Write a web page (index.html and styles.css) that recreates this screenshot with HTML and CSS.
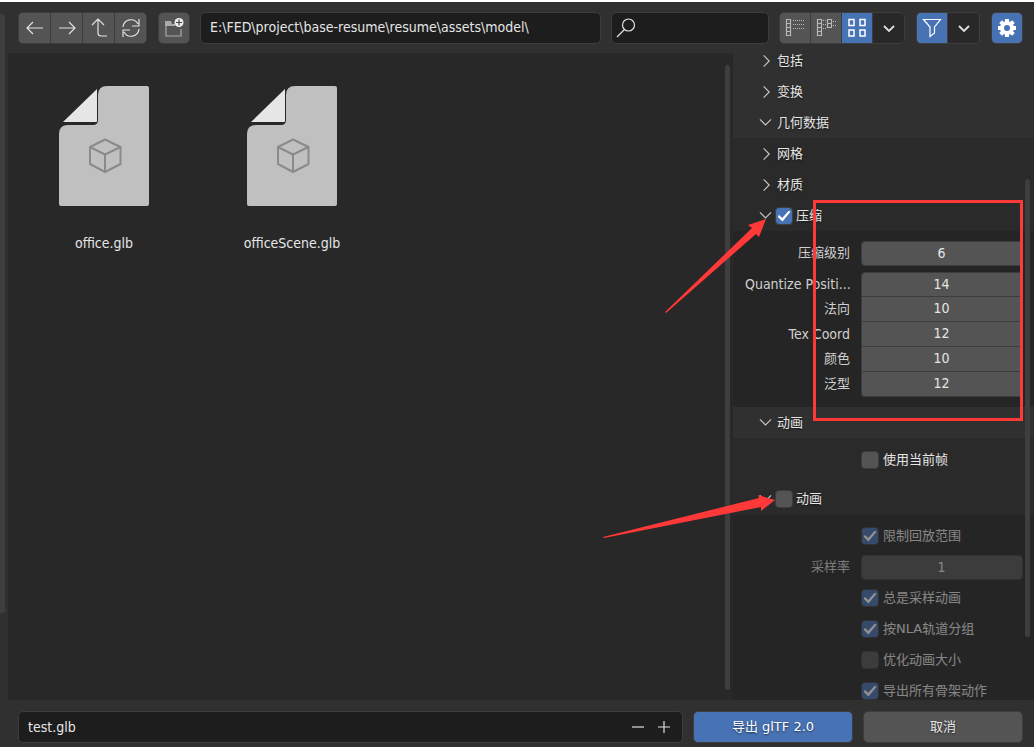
FILE: index.html
```html
<!DOCTYPE html>
<html lang="zh-CN">
<head>
<meta charset="utf-8">
<title>导出 glTF 2.0</title>
<link rel="stylesheet" href="styles.css">
</head>
<body>
<svg class="defs" aria-hidden="true">
  <symbol id="right" viewBox="0 0 14 14"><path d="M5 1l6 6-6 6"/></symbol>
  <symbol id="down" viewBox="0 0 14 14"><path d="M1 3l6 6 6-6"/></symbol>
  <symbol id="caret" viewBox="0 0 14 14"><path d="M2 5l5 5 5-5" stroke-width="1.800"/></symbol>
  <symbol id="file" viewBox="0 0 90 120">
    <path class="sheet" d="M48 0H88q2 0 2 2V118q0 2-2 2H2q-2 0-2-2V48Q0 39 9 39H34Q39 39 39 34V9Q39 0 48 0Z"/>
    <path class="fold" d="M38 3V35q0 1-1 1H4Z"/>
    <path class="cube" d="M46 53.500L61.500 61V78L46 86 31 78V61ZM31 61l15 7.500L61.500 61M46 68.500V86"/>
  </symbol>
</svg>
<div class="window">
  <header class="toolbar">
    <div class="group nav">
      <button class="tool" aria-label="后退"><svg viewBox="0 0 20 20"><path d="M18 10H2M8 4l-6 6 6 6"/></svg></button>
      <button class="tool" aria-label="前进"><svg viewBox="0 0 20 20"><path d="M2 10h16M12 4l6 6-6 6"/></svg></button>
      <button class="tool" aria-label="上级"><svg viewBox="0 0 20 20"><path d="M3 7l6-6 6 6M9 1v14q0 3 3 3h6"/></svg></button>
      <button class="tool" aria-label="刷新"><svg viewBox="0 0 20 20"><path d="M2 9a8 8 0 0 1 15-3M18 1v7h-7M18 11a8 8 0 0 1-15 3M2 19v-7h7"/></svg></button>
    </div>
    <button class="tool group" aria-label="新建文件夹"><svg class="folder" viewBox="0 0 20 20"><path d="M10 7H2v11h15v-7" stroke="#aaa"/><path d="M1 3h6l1 3h3v2H1z" fill="#aaa" stroke="none"/><circle cx="15" cy="4.500" r="4.500" fill="#eee" stroke="none"/><path d="M15 1.500v6M12 4.500h6" stroke="#444"/></svg></button>
    <input class="field path" aria-label="路径" value="E:\FED\project\base-resume\resume\assets\model\">
    <label class="field search"><svg viewBox="0 0 20 20"><circle cx="12.500" cy="7" r="6"/><path d="M8.500 11.500L1 19"/></svg><input type="search" aria-label="搜索"></label>
    <div class="group">
      <button class="tool" aria-label="垂直列表"><svg viewBox="0 0 20 20" class="dim"><path d="M1.500 1.500h4v16h-4zM1.500 5.500h4M1.500 9.500h4M1.500 13.500h4"/><path d="M8 2.500h12M8 6.500h12M8 10.500h12" stroke-dasharray="1 1"/></svg></button>
      <button class="tool" aria-label="水平列表"><svg viewBox="0 0 20 20" class="dim"><path d="M1.500 1.500h4v16h-4zM1.500 5.500h4M1.500 9.500h4M1.500 13.500h4M11.500 1.500h4v8h-4zM11.500 5.500h4"/><path d="M7 2.500h3M7 6.500h3M7 10.500h3M17 3.500h3M17 7.500h3" stroke-dasharray="1 1"/></svg></button>
      <button class="tool active" aria-label="缩略图"><svg viewBox="0 0 20 20"><path d="M2 1.500h5v6H2zM13 1.500h5v6h-5zM2 12h5v6H2zM13 12h5v6h-5z" stroke-width="1.500"/></svg></button>
      <button class="tool dark" aria-label="显示设置"><svg class="small"><use href="#caret"/></svg></button>
    </div>
    <div class="group late">
      <button class="tool active" aria-label="过滤"><svg viewBox="0 0 20 20"><path d="M1.500 1.500h17L12.500 9v6L8 18.500V9z"/></svg></button>
      <button class="tool dark" aria-label="过滤设置"><svg class="small"><use href="#caret"/></svg></button>
    </div>
    <button class="tool group active late" aria-label="选项"><svg viewBox="0 0 20 20"><circle cx="10" cy="10" r="5" stroke-width="4"/><path d="M10 1v3M10 16v3M1 10h3M16 10h3M3.600 3.600l2 2M14.400 14.400l2 2M3.600 16.400l2-2M14.400 5.600l2-2" stroke-width="4"/></svg></button>
  </header>

  <div class="middle">
    <main class="files">
      <figure><svg><use href="#file"/></svg><figcaption>office.glb</figcaption></figure>
      <figure><svg><use href="#file"/></svg><figcaption>officeScene.glb</figcaption></figure>
    </main>
    <aside class="options">
      <div class="scrolled">
        <h2 class="head"><svg><use href="#right"/></svg>包括</h2>
        <h2 class="head"><svg><use href="#right"/></svg>变换</h2>
        <h2 class="head"><svg><use href="#down"/></svg>几何数据</h2>
        <section class="sub">
          <h3 class="head"><svg><use href="#right"/></svg>网格</h3>
          <h3 class="head"><svg><use href="#right"/></svg>材质</h3>
          <h3 class="head"><svg><use href="#down"/></svg><label class="check"><input type="checkbox" checked>压缩</label></h3>
          <div class="body">
            <div class="row"><label for="level">压缩级别</label><input class="num" id="level" value="6"></div>
            <div class="stack">
              <div class="row"><label class="latin" for="qp">Quantize Positi...</label><input class="num" id="qp" value="14"></div>
              <div class="row"><label for="qn">法向</label><input class="num" id="qn" value="10"></div>
              <div class="row"><label class="latin" for="qt">Tex Coord</label><input class="num" id="qt" value="12"></div>
              <div class="row"><label for="qc">颜色</label><input class="num" id="qc" value="10"></div>
              <div class="row"><label for="qg">泛型</label><input class="num" id="qg" value="12"></div>
            </div>
          </div>
        </section>
        <h2 class="head"><svg><use href="#down"/></svg>动画</h2>
        <section class="sub">
          <div class="body plain"><div class="row"><label class="check"><input type="checkbox">使用当前帧</label></div></div>
          <h3 class="head"><svg><use href="#down"/></svg><label class="check"><input type="checkbox">动画</label></h3>
          <div class="body off">
            <div class="row"><label class="check"><input type="checkbox" checked>限制回放范围</label></div>
            <div class="row"><label for="rate">采样率</label><input class="num" id="rate" value="1"></div>
            <div class="row"><label class="check"><input type="checkbox" checked>总是采样动画</label></div>
            <div class="row"><label class="check"><input type="checkbox" checked>按NLA轨道分组</label></div>
            <div class="row"><label class="check"><input type="checkbox">优化动画大小</label></div>
            <div class="row"><label class="check"><input type="checkbox" checked>导出所有骨架动作</label></div>
          </div>
        </section>
      </div>
    </aside>
  </div>

  <footer class="bottom">
    <div class="field name"><input aria-label="文件名" value="test.glb"><button aria-label="减少"><svg viewBox="0 0 14 14"><path d="M1 7h12"/></svg></button><button aria-label="增加"><svg viewBox="0 0 14 14"><path d="M1 7h12M7 1v12"/></svg></button></div>
    <button class="action primary">导出 glTF 2.0</button>
    <button class="action">取消</button>
  </footer>

  <i class="bar left"></i><i class="bar list"></i><i class="bar side"></i>
  <svg class="marks" viewBox="0 0 434 360" aria-hidden="true">
    <path d="M214.500 11.500h207v218h-207z" fill="none" stroke="#ff3838" stroke-width="3"/>
    <path d="M65 122L152 38 148 35 166 29 159 47 156 44 66 123ZM3 347L159 308 158 305 175 310 161 321 161 317 4 348Z"/>
  </svg>
</div>
</body>
</html>
```
FILE: styles.css
```css
* { box-sizing: border-box; }
body { margin: 0; background: #303030; color: #e6e6e6; font: 13px/20px "DejaVu Sans", "Noto Sans CJK SC", sans-serif; }
button, input { font: inherit; color: inherit; }
button { padding: 0; border: 0; }
svg { fill: none; stroke: #e0e0e0; stroke-width: 1.2; }
h2, h3, figure { margin: 0; font: inherit; }
input, figcaption, .latin { font: 14px/20px "DejaVu Sans Condensed", "DejaVu Sans", sans-serif; }
.defs { position: absolute; width: 0; height: 0; }

.window { position: relative; display: flex; flex-direction: column; height: 100vh; min-height: 400px; overflow: hidden; border-top: 2px solid #fff; }

.toolbar { display: flex; flex: none; gap: 10px; height: 51px; padding: 10px 11px 9px 18px; }
.group { display: flex; flex: none; gap: 1px; border: 1px solid #3d3d3d; border-radius: 5px; background: #3d3d3d; overflow: hidden; }
.nav { margin-right: 1px; }
.late { margin-left: 1px; }
.tool { display: flex; align-items: center; justify-content: center; width: 30px; background: #545454; }
.nav .tool { width: 31px; }
.tool.group { width: 32px; background: #545454; }
.tool.active, .tool.group.active { background: #4772b3; }
.tool.dark { width: 31px; background: #282828; }
.tool svg { width: 20px; height: 20px; }
.tool svg.small { width: 14px; height: 14px; }
.active svg { stroke: #fff; }
.tool .dim { stroke: #b8b8b8; stroke-width: 1.2; }

.field { min-width: 0; border: 1px solid #3d3d3d; border-radius: 5px; background: #1d1d1d; }
.path { flex: 1; padding: 0 9px 2px; }
.search { display: flex; align-items: center; width: 158px; padding: 0 4px; }
.search svg { width: 20px; height: 20px; flex: none; }
.field input { flex: 1; min-width: 0; padding: 0; border: 0; outline: 0; background: none; }

.middle { display: flex; flex: 1; min-height: 0; padding-left: 8px; }
.files { display: flex; flex: 1; align-items: flex-start; padding: 33px 2px; background: #282828; }
.files figure { display: flex; flex-direction: column; align-items: center; gap: 27px; width: 188px; }
.files svg { width: 90px; height: 120px; }
.sheet { fill: #c0c0c0; stroke: none; }
.fold { fill: #e6e6e6; stroke: none; }
.cube { fill: none; stroke: #8a8a8a; stroke-width: 2; stroke-linejoin: round; }

.options { width: 301px; overflow: hidden; }
.scrolled { margin-top: -8px; }
.head { display: flex; align-items: center; gap: 5px; height: 31px; padding: 1px 0 0 26px; text-shadow: 0 1px 2px #0008; }
.head svg { width: 13px; height: 14px; stroke: #c8c8c8; }
.sub { background: #2a2a2a; }
.check { display: flex; align-items: center; gap: 3px; }
.head .check { margin-left: -2px; }
.check input { appearance: none; width: 18px; height: 18px; margin: 0; border: 1px solid #3d3d3d; border-radius: 4px; background: #545454; }
.check input:checked { display: grid; place-items: center; background: #4772b3; }
.check input:checked::before { content: ""; width: 13px; height: 11px; background: #fff; clip-path: polygon(0 55%, 12% 42%, 36% 68%, 88% 0, 100% 12%, 38% 100%); }
.body { display: flex; flex-direction: column; gap: 6px; padding: 10px 11px 10px 12px; border-radius: 0 0 5px 5px; background: #252525; }
.body.plain { background: none; }
.row { display: grid; grid-template-columns: 105px 1fr; column-gap: 11px; align-items: center; height: 25px; color: #d0d0d0; text-align: right; white-space: nowrap; }
.row > label { padding-bottom: 1px; }
.row .check { grid-column: 2; gap: 4px; color: #e6e6e6; }
.num { width: 100%; min-width: 0; height: 25px; padding: 0 1px 2px 0; border: 1px solid #3d3d3d; border-radius: 4px; background: #545454; color: #e6e6e6; text-align: center; }
.stack .num { border-top-width: 0; border-radius: 0; }
.stack .row:first-child .num { border-top-width: 1px; border-radius: 4px 4px 0 0; }
.stack .row:last-child .num { border-radius: 0 0 4px 4px; }
.off .row > * { opacity: .5; }

.bottom { display: flex; flex: none; gap: 10px; height: 47px; padding: 11px 11px 4px 18px; }
.name { display: flex; flex: 1; align-items: center; padding: 0 5px 0 9px; }
.name button { display: grid; place-items: center; width: 26px; height: 28px; background: none; }
.name svg { width: 14px; height: 14px; }
.action { width: 160px; border: 1px solid #3d3d3d; border-radius: 5px; background: #545454; text-shadow: 0 1px 2px #0008; }
.primary { background: #4772b3; color: #fff; }

.bar { position: absolute; width: 5px; border-radius: 3px; background: #3e3e3e; }
.left { top: 12px; bottom: 134px; left: 0; border-radius: 0 3px 3px 0; }
.list { top: 63px; bottom: 57px; right: 304px; }
.side { top: 177px; bottom: 110px; right: 4px; }
.marks { position: absolute; top: 188px; right: 0; width: 434px; height: 360px; fill: #ff3838; stroke: none; pointer-events: none; }
```
